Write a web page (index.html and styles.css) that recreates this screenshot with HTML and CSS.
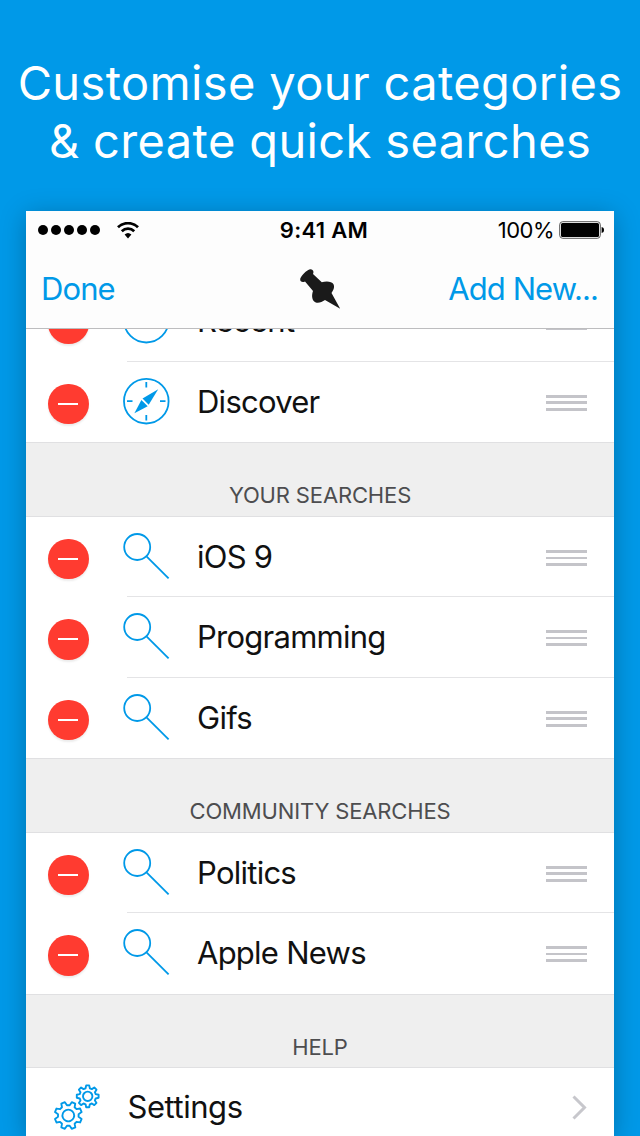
FILE: index.html
```html
<!doctype html>
<html lang="en">
  <head>
    <meta charset="UTF-8" />
    <meta name="viewport" content="width=device-width, initial-scale=1.0" />
    <title>Categories</title>
    <link rel="stylesheet" href="styles.css">
  </head>
  <body>
    <svg class="symbols" xmlns="http://www.w3.org/2000/svg">
      <symbol id="search" viewBox="0 0 48 48">
        <circle cx="15.2" cy="15" r="13"/>
        <path d="M24.500 24.300L46.600 46.400"/>
      </symbol>
      <symbol id="recent" viewBox="0 0 48 48">
        <circle cx="24.3" cy="24.2" r="22.3"/>
        <path d="M24.3 9v15.200h11"/>
      </symbol>
      <symbol id="compass" viewBox="0 0 48 48">
        <circle cx="24.3" cy="24.2" r="22.3"/>
        <path d="M24.3 5v5.5M24.3 38v5.5M5 24.2h5.5M38 24.2h5.500"/>
        <path class="fill" d="M36.200 12.300L26.700 27.800L20.500 21.600z"/>
        <path class="fill" d="M12.400 36.200L19.400 22.900L25.700 29.200z"/>
      </symbol>
    </svg>

    <h1 class="headline">Customise your categories<br>&amp; create quick searches</h1>

    <div class="phone">
      <header class="top">
        <div class="status">
          <div class="signal">
            <i></i><i></i><i></i><i></i><i></i>
            <svg class="wifi" viewBox="0 0 22 17" width="22" height="17">
              <path d="M1 5.200a14.500 14.500 0 0 1 20 0M4.800 9.200a9 9 0 0 1 12.400 0"/>
              <path class="base" d="M7.600 12.600a5 5 0 0 1 6.800 0L11 16.400z"/>
            </svg>
          </div>
          <span class="time">9:41 AM</span>
          <div class="power">
            <span class="percent">100%</span>
            <svg viewBox="0 0 46 18" width="46" height="18">
              <rect class="shell" x=".7" y=".7" width="40.6" height="16.6" rx="3"/>
              <rect x="2" y="2" width="38" height="14" rx="1.5"/>
              <path d="M42.6 6c1.900.3 2.400 1.500 2.400 3s-.5 2.700-2.400 3z"/>
            </svg>
          </div>
        </div>
        <nav class="navbar">
          <a class="done" href="#">Done</a>
          <svg class="pin" viewBox="0 0 42 42" width="42" height="42">
            <path d="M1.200 12C.6 8.500 8.500.8 12 1.200C14.500 1.700 15 4 14 6L22.800 14.300C26.500 12.800 33 13 34.500 16.200C36 19.500 34 22.500 32.500 25L41.200 40.800L26 32C22.500 34.500 18 36 15.200 33.600C12.500 30.500 12.800 26.500 14 23L6 13.400C4.500 14.200 1.800 14.500 1.200 12z"/>
          </svg>
          <a class="add" href="#">Add New...</a>
        </nav>
      </header>

      <main class="list">
        <div class="row">
          <span class="minus"></span>
          <svg class="icon"><use href="#recent"/></svg>
          <span class="label">Recent</span>
          <span class="handle"></span>
        </div>
        <div class="row last">
          <span class="minus"></span>
          <svg class="icon"><use href="#compass"/></svg>
          <span class="label">Discover</span>
          <span class="handle"></span>
        </div>

        <h2 class="section">YOUR SEARCHES</h2>
        <div class="row">
          <span class="minus"></span>
          <svg class="icon"><use href="#search"/></svg>
          <span class="label">iOS 9</span>
          <span class="handle"></span>
        </div>
        <div class="row">
          <span class="minus"></span>
          <svg class="icon"><use href="#search"/></svg>
          <span class="label">Programming</span>
          <span class="handle"></span>
        </div>
        <div class="row last">
          <span class="minus"></span>
          <svg class="icon"><use href="#search"/></svg>
          <span class="label">Gifs</span>
          <span class="handle"></span>
        </div>

        <h2 class="section">COMMUNITY SEARCHES</h2>
        <div class="row">
          <span class="minus"></span>
          <svg class="icon"><use href="#search"/></svg>
          <span class="label">Politics</span>
          <span class="handle"></span>
        </div>
        <div class="row last">
          <span class="minus"></span>
          <svg class="icon"><use href="#search"/></svg>
          <span class="label">Apple News</span>
          <span class="handle"></span>
        </div>

        <h2 class="section">HELP</h2>
        <div class="row settings last">
          <svg class="gears" viewBox="0 0 48 48" width="48" height="48">
            <defs>
              <g id="gear">
                <path d="M8-2.150L10.900-1.500V1.500L8 2.150L7.200 4.150L8.800 6.600L6.600 8.800L4.150 7.200L2.150 8L1.500 10.900H-1.500L-2.150 8L-4.150 7.200L-6.600 8.800L-8.800 6.600L-7.200 4.150L-8 2.150L-10.900 1.500V-1.500L-8-2.150L-7.200-4.150L-8.800-6.600L-6.600-8.800L-4.150-7.200L-2.150-8L-1.500-10.900H1.500L2.150-8L4.150-7.200L6.600-8.800L8.800-6.600L7.200-4.150z"/>
                <circle r="4.700"/>
              </g>
            </defs>
            <use href="#gear" transform="translate(16.300 31.500) rotate(22.500) scale(1.250)" stroke-width="1.500"/>
            <use href="#gear" transform="translate(35.700 12.300)" stroke-width="1.900"/>
          </svg>
          <span class="label">Settings</span>
          <svg class="chevron" viewBox="0 0 16 26" width="16" height="26">
            <path d="M2.500 1.500L13.500 12.500L2.500 23.500"/>
          </svg>
        </div>
      </main>
    </div>
  </body>
</html>
```

FILE: styles.css
```css
* {
  margin: 0;
  padding: 0;
  box-sizing: border-box;
}

body {
  height: 1136px;
  display: flex;
  flex-direction: column;
  overflow: hidden;
  font-family: Inter, "Liberation Sans", sans-serif;
  background: #0099e8;
}

.symbols {
  display: none;
}

.headline {
  height: 211px;
  flex: none;
  padding-top: 54px;
  color: white;
  font-size: 47px;
  font-weight: 400;
  line-height: 58px;
  letter-spacing: 0.37px;
  text-align: center;
  white-space: nowrap;
}

.phone {
  flex: 1;
  min-height: 0;
  display: flex;
  flex-direction: column;
  margin: 0 26px;
  background: white;
  box-shadow: 0 4px 24px rgba(0, 0, 0, 0.26);
}

.top {
  flex: none;
  height: 118px;
  background: #fdfdfd;
  border-bottom: 1px solid #bdbdbf;
}

.status {
  height: 38px;
  display: grid;
  grid-template-columns: 1fr auto 1fr;
  align-items: center;
  padding: 0 9px 0 12px;
  font-size: 22px;
}

.signal {
  display: flex;
  align-items: center;
  gap: 2.8px;
}

.signal i {
  width: 10.2px;
  height: 10.2px;
  border-radius: 50%;
  background: black;
}

.wifi {
  margin-left: 14px;
  fill: none;
  stroke: black;
  stroke-width: 2.8;
}

.wifi .base {
  fill: black;
  stroke: none;
}

.time {
  padding-left: 5px;
  font-weight: 600;
  letter-spacing: 0.3px;
}

.power {
  display: flex;
  justify-content: flex-end;
  align-items: center;
  gap: 5px;
}

.percent {
  letter-spacing: -0.5px;
}

.shell {
  fill: none;
  stroke: #555;
}

.navbar {
  height: 80px;
  display: grid;
  grid-template-columns: 1fr auto 1fr;
  align-items: center;
  padding: 0 16px 0 15px;
}

.navbar a {
  margin-top: -2px;
  color: #0099e8;
  font-size: 31px;
  letter-spacing: -0.9px;
  text-decoration: none;
}

.navbar .add {
  text-align: right;
}

.pin {
  margin-top: -1px;
  fill: #1a1a1a;
}

.list {
  flex: 1;
  min-height: 0;
  overflow: hidden;
}

.row {
  height: 80.5px;
  display: flex;
  align-items: center;
  padding: 0 27px 0 22px;
  background: linear-gradient(#e4e4e6, #e4e4e6) 101px 100% / 100% 1px no-repeat;
}

.row:first-child {
  margin-top: -48px;
}

.row.last {
  background: none;
}

.minus {
  width: 40.5px;
  height: 40.5px;
  display: flex;
  align-items: center;
  justify-content: center;
  margin-top: 4px;
  border-radius: 50%;
  background: #ff3b30;
  box-shadow: 0 2px 2px rgba(0, 0, 0, 0.08);
}

.minus::before {
  content: '';
  width: 20px;
  height: 2px;
  background: white;
}

.icon {
  width: 48px;
  height: 48px;
  margin: -2px 27.5px 0 33px;
  fill: none;
  stroke: #0099e8;
  stroke-width: 1.8;
}

.fill {
  fill: #0099e8;
  stroke: none;
}

.label {
  flex: 1;
  margin-top: -0.4px;
  color: #111;
  font-size: 31px;
  line-height: 40px;
  letter-spacing: -0.75px;
}

.handle {
  width: 41px;
  height: 16px;
  margin-top: 1.6px;
  background: repeating-linear-gradient(#c4c4c9 0 2.8px, transparent 2.8px 6.5px);
}

.section {
  height: 74.5px;
  padding-top: 38px;
  background: #efefef;
  border-top: 1px solid #e0e0e2;
  border-bottom: 1px solid #e0e0e2;
  color: #4d4d4f;
  font-size: 22px;
  font-weight: 400;
  line-height: 28px;
  letter-spacing: -0.15px;
  text-align: center;
}

.settings {
  padding-left: 26px;
}

.gears {
  margin-right: 27.5px;
  fill: none;
  stroke: #0099e8;
  stroke-linejoin: round;
}

.settings .label {
  margin-top: -2px;
  letter-spacing: -0.45px;
}

.chevron {
  margin-top: -1px;
  fill: none;
  stroke: #c7c7cc;
  stroke-width: 3;
}
```
